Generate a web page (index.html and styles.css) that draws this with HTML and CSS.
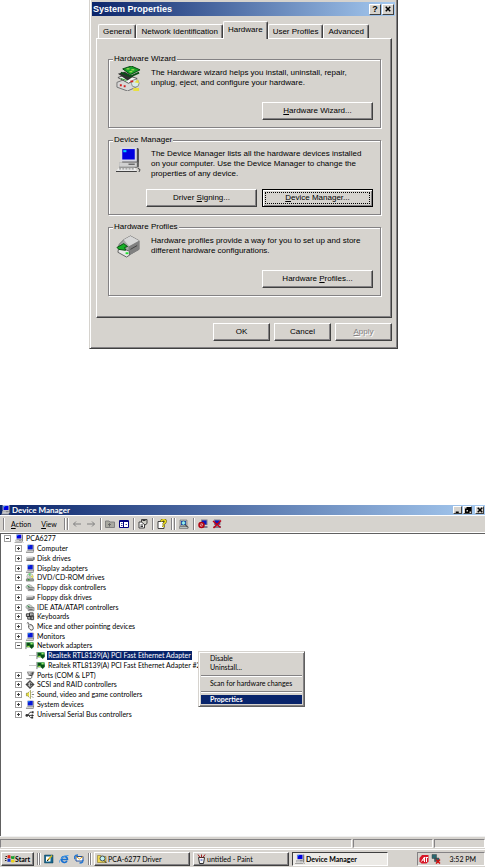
FILE: index.html
```html
<!DOCTYPE html>
<html lang="en">

<head>
    <meta charset="UTF-8">
    <title>Device Manager</title>
    <link rel="stylesheet" href="styles.css">
</head>

<body>
    <svg class="defs" aria-hidden="true">
        <symbol id="pc" viewBox="0 0 24 24">
            <path d="M5 1h16l1 1v13H6z" fill="#505050" />
            <path d="M4 0h16v14H4z" fill="#d8d8e0" />
            <path d="M6 2h12v10H6z" fill="#0000e0" />
            <path d="M7 3h3v2H7z" fill="#00c8ff" />
            <path d="M3 15h17l2-1v5l-2 1H3z" fill="#606060" />
            <path d="M3 15h17v4H3z" fill="#d0d0d0" />
            <path d="M12 16h6v1h-6z" fill="#404040" />
            <path d="M3 20h15l2 3H0z" fill="#f0f0f0" />
            <path d="M0 23h20v1H0z" fill="#404040" />
            <path d="M3 21h2m1 0h2m1 0h2m1 0h2m1 0h2" stroke="#909090" />
            <path d="M21 20l2 2-1 2" fill="none" stroke="#505050" />
        </symbol>
        <symbol id="monitor" viewBox="0 0 20 20">
            <path d="M4 1h14v13H4z" fill="#c8c8c8" />
            <path d="M5 2h11v10H5z" fill="#0818d8" />
            <path d="M6 3h3v2H6z" fill="#30c8ff" />
            <path d="M18 2h1v13H4v-1h14z" fill="#404040" />
            <path d="M1 15h16v3H1z" fill="#d0d0d0" />
            <path d="M1 18h17v1H1zM17 15h1v3h-1z" fill="#404040" />
        </symbol>
        <symbol id="drive" viewBox="0 0 20 20">
            <path d="M3 6h15l1 2v6H2V8z" fill="#a8a8a8" />
            <path d="M3 7h13v2H3z" fill="#e0e0e0" />
            <path d="M2 14h15l2-2V7" fill="none" stroke="#404040" stroke-width="2" />
            <path d="M5 11h9" stroke="#707070" />
        </symbol>
        <symbol id="disc" viewBox="0 0 20 20">
            <circle cx="10" cy="8" r="7" fill="#e0e0d8" stroke="#808080" />
            <path d="M10 8 6 2a7 7 0 0 1 6-1z" fill="#60e070" />
            <path d="M10 8l7-3v6z" fill="#e8e050" />
            <circle cx="10" cy="8" r="2" fill="#fff" stroke="#707070" />
            <path d="M2 13h16v5H2z" fill="#a0a8a0" stroke="#404040" />
            <path d="M5 15h4" stroke="#00a000" stroke-width="2" />
        </symbol>
        <symbol id="ctrl" viewBox="0 0 20 20">
            <path d="M1 7l7-4 7 4v4l-7 4-7-4z" fill="#c8d0c8" stroke="#808080" />
            <path d="M4 6l6 4" stroke="#209040" stroke-width="2" />
            <path d="M6 10h13v7H6z" fill="#c8c8c8" stroke="#404040" />
            <path d="M8 14h8" stroke="#505050" stroke-width="2" />
        </symbol>
        <symbol id="keys" viewBox="0 0 20 20">
            <path d="M2 4h7v6H2zM9 2h8v7H9zM5 10h7v6H5zM12 9h6v8h-6z" fill="#d0d0d0" stroke="#303030" stroke-width="2" />
            <path d="M4 7h3M12 5h2M8 13h2M14 13h3" stroke="#303030" />
        </symbol>
        <symbol id="mouse" viewBox="0 0 20 20">
            <path d="M3 3c4-4 5 1 3 3" fill="none" stroke="#404040" stroke-width="2" />
            <path d="M7 8c2-4 7-3 9 1 2 5 2 8-2 9-3 0-5-2-7-6z" fill="#f4f4f4" stroke="#404040" stroke-width="2" />
            <path d="M8 10l6-3" stroke="#707070" />
        </symbol>
        <symbol id="nic" viewBox="0 0 20 20">
            <path d="M1 2v16" stroke="#707070" stroke-width="2" />
            <path d="M2 3h16v11H2z" fill="#0a7a20" />
            <path d="M4 5h5v5H4z" fill="#103818" />
            <path d="M11 4h5v5h-5z" fill="#70e070" />
            <path d="M10 8h8v4l-4 6-4-4z" fill="#085018" />
            <path d="M4 12h5M13 6h2" stroke="#d8f060" stroke-width="2" />
        </symbol>
        <symbol id="port" viewBox="0 0 20 20">
            <path d="M4 2h15l-3 8H7z" fill="#d8d8d8" stroke="#404040" />
            <path d="M14 3h4l-2 6h-3z" fill="#484848" />
            <path d="M7 5h1m2 0h1m2 0h1M8 8h1m2 0h1" stroke="#303030" stroke-width="2" />
            <path d="M9 10h5v3c0 4-3 5-12 4" fill="none" stroke="#404040" stroke-width="2" />
        </symbol>
        <symbol id="scsi" viewBox="0 0 20 20">
            <path d="M10 2l8 8-8 8-8-8z" fill="#d0d0d0" stroke="#505050" stroke-width="3" />
            <path d="M1 10h6m4-3v6m0-3h8" stroke="#404040" stroke-width="2" />
        </symbol>
        <symbol id="sound" viewBox="0 0 20 20">
            <path d="M2 7h3l6-6v18l-6-6H2z" fill="#e8e040" stroke="#505000" />
            <path d="M9 3v14" stroke="#fff" stroke-width="2" />
            <path d="M14 6l3-3M14 10h5M14 14l3 3" stroke="#707070" stroke-width="2" />
        </symbol>
        <symbol id="usb" viewBox="0 0 20 20">
            <path d="M1 12h14M5 12l5-7h4M7 12l4 5h4" fill="none" stroke="#303030" stroke-width="2" />
            <path d="M14 9l5 3-5 3zM14 3h4v4h-4zM13 15h4v4h-4z" fill="#303030" />
            <circle cx="3" cy="12" r="3" fill="#303030" />
        </symbol>
    </svg>

    <div class="top">
        <form class="dialog">
            <header class="caption">
                <h1>System Properties</h1>
                <button type="button" class="cap" aria-label="Help">?</button>
                <button type="button" class="cap" aria-label="Close">
                    <svg viewBox="0 0 8 8"><path d="M1 1l6 6M7 1L1 7" /></svg>
                </button>
            </header>
            <nav class="tabs">
                <button type="button">General</button>
                <button type="button">Network Identification</button>
                <button type="button" class="active">Hardware</button>
                <button type="button">User Profiles</button>
                <button type="button">Advanced</button>
            </nav>
            <div class="panel">
                <fieldset>
                    <legend>Hardware Wizard</legend>
                    <div class="info">
                        <svg viewBox="0 0 26 26">
                            <path d="M1 17l8-3 12 4v4l-9 4-11-4z" fill="#d8d8d8" stroke="#707070" />
                            <path d="M2 12l8-3 12 4-9 5z" fill="#f4f4f4" stroke="#505050" />
                            <path d="M2 8l7-2 9 5-6 4z" fill="#303030" />
                            <path d="M7 3l9-3 9 4-10 5z" fill="#18a028" stroke="#084810" />
                            <path d="M5 7l10 4 9-4" fill="none" stroke="#0a5018" stroke-width="2" />
                            <path d="M11 3h3m2 1h3m-5 2h3" stroke="#c8f060" />
                            <circle cx="20" cy="18" r="4" fill="#d8ece8" stroke="#889088" />
                            <path d="M19 17l4-3 1 4zM18 23h6v3h-6z" fill="#e8e040" />
                            <path d="M4 20h2m2 1h2M15 16h3" stroke="#d02020" stroke-width="2" />
                            <path d="M5 13l6 2" stroke="#20a020" />
                        </svg>
                        <p>The Hardware wizard helps you install, uninstall, repair,<br>unplug, eject, and configure your hardware.</p>
                    </div>
                    <div class="actions">
                        <button type="button"><u>H</u>ardware Wizard...</button>
                    </div>
                </fieldset>
                <fieldset>
                    <legend>Device Manager</legend>
                    <div class="info">
                        <svg><use href="#pc" /></svg>
                        <p>The Device Manager lists all the hardware devices installed<br>on your computer. Use the Device Manager to change the<br>properties of any device.</p>
                    </div>
                    <div class="actions">
                        <button type="button">Driver <u>S</u>igning...</button>
                        <button type="button" class="focused"><u>D</u>evice Manager...</button>
                    </div>
                </fieldset>
                <fieldset>
                    <legend>Hardware Profiles</legend>
                    <div class="info">
                        <svg viewBox="0 0 26 26">
                            <path d="M8 6l7-4 9 5v9l-11 6-10-6v-5z" fill="#a8a8a8" stroke="#707070" />
                            <path d="M8 6l7-4 9 5-10 6z" fill="#d8d8d8" />
                            <path d="M13 13l11-6v9l-11 7z" fill="#808080" />
                            <path d="M3 13l11 5v4l-3 2-9-5z" fill="#e8e8e8" stroke="#606060" />
                            <path d="M1 14l7-4 4 3-3 1 1 3-7-1z" fill="#18b028" stroke="#085010" />
                            <path d="M15 16l7-4" stroke="#404040" />
                            <path d="M10 20h3" stroke="#20e030" stroke-width="2" />
                        </svg>
                        <p>Hardware profiles provide a way for you to set up and store<br>different hardware configurations.</p>
                    </div>
                    <div class="actions">
                        <button type="button">Hardware <u>P</u>rofiles...</button>
                    </div>
                </fieldset>
            </div>
            <footer>
                <button type="button">OK</button>
                <button type="button">Cancel</button>
                <button type="button" disabled><u>A</u>pply</button>
            </footer>
        </form>
    </div>

    <main class="desktop">
        <header class="caption">
            <svg class="ico"><use href="#pc" /></svg>
            <h2>Device Manager</h2>
            <button class="cap" aria-label="Minimize"><svg viewBox="0 0 8 8"><path d="M1 7h4" /></svg></button>
            <button class="cap" aria-label="Restore"><svg viewBox="0 0 8 8"><path d="M3 3V1h4v4H5M1 3h4v4H1z" /></svg></button>
            <button class="cap close" aria-label="Close"><svg viewBox="0 0 8 8"><path d="M1 1l6 6M7 1L1 7" /></svg></button>
        </header>

        <div class="toolbar">
            <i class="bar"></i>
            <button class="menu"><u>A</u>ction</button>
            <button class="menu"><u>V</u>iew</button>
            <i class="bar"></i><i class="bar"></i>
            <button aria-label="Back"><svg viewBox="0 0 20 20"><path d="M18 10H3m5-5l-5 5 5 5" fill="none" stroke="#808080" stroke-width="2" /></svg></button>
            <button aria-label="Forward"><svg viewBox="0 0 20 20"><path d="M2 10h15m-5-5l5 5-5 5" fill="none" stroke="#808080" stroke-width="2" /></svg></button>
            <i class="bar"></i>
            <button aria-label="Up"><svg viewBox="0 0 20 20"><path d="M1 4h7l2 2h9v11H1z" fill="#a8a8a0" stroke="#808080" stroke-width="2" /><path d="M9 15V9m-3 3l3-3 3 3" fill="none" stroke="#686868" stroke-width="2" /></svg></button>
            <button aria-label="Show tree"><svg viewBox="0 0 20 20"><path d="M1 3h18v14H1z" fill="#fff" stroke="#000080" stroke-width="2" /><path d="M1 5h18M9 4v13" stroke="#000080" stroke-width="2" /><path d="M4 9h3m-3 4h3m6-2h3" stroke="#4040a0" stroke-width="2" /></svg></button>
            <i class="bar"></i>
            <button aria-label="Properties"><svg viewBox="0 0 20 20"><path d="M2 6h11v12H2z" fill="#fff" stroke="#404040" stroke-width="2" /><path d="M7 1h11v8l-4 3-7-6z" fill="#d0d0c8" stroke="#404040" stroke-width="2" /><path d="M9 3h6M5 12h5m-5 3h5" stroke="#303030" stroke-width="2" /></svg></button>
            <i class="bar"></i>
            <button aria-label="Help"><svg viewBox="0 0 20 20"><path d="M2 5h12v14H2z" fill="#fff" stroke="#404040" stroke-width="2" /><path d="M9 5c0-5 9-4 8 0 0 3-4 3-4 6m0 2v3" fill="none" stroke="#605800" stroke-width="5" /><path d="M9 5c0-5 9-4 8 0 0 3-4 3-4 6m0 2v3" fill="none" stroke="#f0e020" stroke-width="3" /></svg></button>
            <i class="bar"></i><i class="bar"></i>
            <button aria-label="Scan"><svg viewBox="0 0 20 20"><path d="M2 2h14v12H2zM1 15h17v4H1z" fill="#b8c0c0" stroke="#505050" /><path d="M4 4h10v8H4z" fill="#1030c0" /><circle cx="9" cy="8" r="4" fill="#90f0f8" stroke="#205060" /><path d="M12 11l6 6" stroke="#303030" stroke-width="2" /></svg></button>
            <i class="bar"></i>
            <button aria-label="Disable"><svg viewBox="0 0 20 20"><path d="M6 1h13v11H6zM4 14h15v4H4z" fill="#808090" /><path d="M8 3h9v8H8z" fill="#0818c0" /><circle cx="7" cy="12" r="5" fill="#e0a0a0" stroke="#b00010" stroke-width="3" /><path d="M4 9l6 6" stroke="#b00010" stroke-width="2" /></svg></button>
            <button aria-label="Uninstall"><svg viewBox="0 0 20 20"><path d="M4 1h13v11H4zM3 14h15v4H3z" fill="#808090" /><path d="M6 3h9v8H6z" fill="#0818c0" /><path d="M2 4l15 13M18 3L3 18" stroke="#c00018" stroke-width="3" /></svg></button>
        </div>

        <div class="view">
            <ul class="tree">
                <li class="root"><i class="exp"></i><svg class="ico"><use href="#pc" /></svg><span>PCA6277</span></li>
                <li><i class="exp plus"></i><svg class="ico"><use href="#monitor" /></svg><span>Computer</span></li>
                <li><i class="exp plus"></i><svg class="ico"><use href="#drive" /></svg><span>Disk drives</span></li>
                <li><i class="exp plus"></i><svg class="ico"><use href="#monitor" /></svg><span>Display adapters</span></li>
                <li><i class="exp plus"></i><svg class="ico"><use href="#disc" /></svg><span>DVD/CD-ROM drives</span></li>
                <li><i class="exp plus"></i><svg class="ico"><use href="#ctrl" /></svg><span>Floppy disk controllers</span></li>
                <li><i class="exp plus"></i><svg class="ico"><use href="#drive" /></svg><span>Floppy disk drives</span></li>
                <li><i class="exp plus"></i><svg class="ico"><use href="#ctrl" /></svg><span>IDE ATA/ATAPI controllers</span></li>
                <li><i class="exp plus"></i><svg class="ico"><use href="#keys" /></svg><span>Keyboards</span></li>
                <li><i class="exp plus"></i><svg class="ico"><use href="#mouse" /></svg><span>Mice and other pointing devices</span></li>
                <li><i class="exp plus"></i><svg class="ico"><use href="#monitor" /></svg><span>Monitors</span></li>
                <li><i class="exp"></i><svg class="ico"><use href="#nic" /></svg><span>Network adapters</span></li>
                <li class="leaf"><svg class="ico"><use href="#nic" /></svg><span class="selected">Realtek RTL8139(A) PCI Fast Ethernet Adapter</span></li>
                <li class="leaf"><svg class="ico"><use href="#nic" /></svg><span>Realtek RTL8139(A) PCI Fast Ethernet Adapter #2</span></li>
                <li><i class="exp plus"></i><svg class="ico"><use href="#port" /></svg><span>Ports (COM &amp; LPT)</span></li>
                <li><i class="exp plus"></i><svg class="ico"><use href="#scsi" /></svg><span>SCSI and RAID controllers</span></li>
                <li><i class="exp plus"></i><svg class="ico"><use href="#sound" /></svg><span>Sound, video and game controllers</span></li>
                <li><i class="exp plus"></i><svg class="ico"><use href="#monitor" /></svg><span>System devices</span></li>
                <li><i class="exp plus"></i><svg class="ico"><use href="#usb" /></svg><span>Universal Serial Bus controllers</span></li>
            </ul>
            <div class="popup">
                <button>Disable</button>
                <button>Uninstall...</button>
                <hr>
                <button>Scan for hardware changes</button>
                <hr>
                <button class="selected">Properties</button>
            </div>
        </div>

        <div class="status"><span></span><span></span><span></span></div>

        <footer class="taskbar">
            <button class="start">
                <svg class="ico" viewBox="0 0 20 20"><path d="M1 5h3M0 9h3M0 13h3" stroke="#202020" stroke-width="2" /><path d="M5 3c3-2 4-1 6 0v6c-2-1-4-1-6 0z" fill="#e02818" /><path d="M12 4c2 1 4 1 7-1v6c-3 2-5 1-7 0z" fill="#18a030" /><path d="M5 10c2-1 4-1 6 0v6c-2-1-4-1-6 0z" fill="#1838d0" /><path d="M12 11c2 1 4 1 7-1v6c-3 2-5 1-7 0z" fill="#e8d018" /></svg>Start
            </button>
            <i class="bar"></i><i class="bar"></i>
            <button class="quick" aria-label="Show Desktop"><svg viewBox="0 0 20 20"><path d="M1 2h17v16H1z" fill="#186890" stroke="#083850" /><path d="M4 5h9v10H4z" fill="#fff" /><path d="M7 13L16 3" stroke="#d8b820" stroke-width="3" /><path d="M6 14l3-3" stroke="#202020" stroke-width="2" /></svg></button>
            <button class="quick" aria-label="Internet Explorer"><svg viewBox="0 0 20 20"><path d="M16 14c-3 5-12 3-11-4 1-7 12-7 12 1H6" fill="none" stroke="#1870d0" stroke-width="3" /><path d="M1 17C0 11 10 2 19 3" fill="none" stroke="#50a0e8" stroke-width="2" /></svg></button>
            <button class="quick" aria-label="Outlook Express"><svg viewBox="0 0 20 20"><path d="M4 5h14v9H4z" fill="#fff" stroke="#2050a0" stroke-width="2" /><path d="M4 5l7 5 7-5" fill="none" stroke="#e0a020" stroke-width="2" /><path d="M8 2C0 2 0 8 2 10M11 18c6 0 7-2 6-6" fill="none" stroke="#2878d0" stroke-width="3" /></svg></button>
            <i class="bar"></i><i class="bar"></i>
            <button class="task"><svg class="ico" viewBox="0 0 20 20"><path d="M1 3h7l2 2h8v12H1z" fill="#f0d850" stroke="#706010" /><circle cx="11" cy="9" r="5" fill="#c0f0f0" stroke="#405060" stroke-width="2" /><path d="M14 13l5 5" stroke="#303030" stroke-width="2" /></svg>PCA-6277 Driver</button>
            <button class="task"><svg class="ico" viewBox="0 0 20 20"><path d="M5 7h12l-2 12H7z" fill="#f4f4f4" stroke="#303030" stroke-width="2" /><path d="M8 7L4 1M11 7V1M14 7l4-6" stroke="#a02020" stroke-width="2" /><path d="M9 12h4" stroke="#2040c0" stroke-width="2" /></svg>untitled - Paint</button>
            <button class="task pressed"><svg class="ico"><use href="#pc" /></svg>Device Manager</button>
            <div class="tray">
                <svg class="ico" viewBox="0 0 20 20"><path d="M6 2h13v13l-4 4H5l-4-4V8z" fill="#d81828" /><path d="M5 15l6-9v10M7 12h4M13 7h5m-3 0v9" fill="none" stroke="#fff" stroke-width="2" /></svg>
                <svg class="ico" viewBox="0 0 20 20"><path d="M2 1h9v8H2zM7 8h9v7H7z" fill="#286870" stroke="#404040" /><path d="M10 11l8 8M18 11l-8 8" stroke="#d01010" stroke-width="3" /></svg>
                <time>3:52 PM</time>
            </div>
        </footer>
    </main>
</body>

</html>
```
FILE: styles.css
```css
* {
    box-sizing: border-box;
}

body {
    margin: 0;
    min-height: 100vh;
    display: flex;
    flex-direction: column;
    background: #fff;
    color: #000;
    font: 8px/10px "Liberation Sans", Arial, sans-serif;
}

button {
    padding: 0;
    border: 0;
    background: none;
    color: inherit;
    font: inherit;
    white-space: nowrap;
}

h1,
h2,
p,
ul {
    margin: 0;
    padding: 0;
}

ul {
    list-style: none;
}

.defs {
    position: absolute;
    width: 0;
    height: 0;
}

.ico {
    width: 10px;
    height: 10px;
    flex: none;
}

/* title bars */
.caption {
    display: flex;
    align-items: center;
    background: linear-gradient(90deg, #0a246a, #a6caf0);
    color: #fff;
}

.caption h1,
.caption h2 {
    flex: 1;
    font-weight: bold;
}

.cap {
    display: flex;
    align-items: center;
    justify-content: center;
    background: #d6d3ce;
    border: 1px solid;
    border-color: #fff #404040 #404040 #fff;
    color: #000;
    font-weight: bold;
}

.cap svg {
    width: 6px;
    height: 6px;
    fill: none;
    stroke: #000;
    stroke-width: 2;
}

/* system properties */
.top {
    display: flex;
    justify-content: center;
    padding-left: 2px;
    margin-bottom: 156px;
}

.dialog {
    width: 309px;
    padding: 2px 5px 7px 2px;
    background: #d6d3ce;
    border: 1px solid;
    border-color: transparent #404040 #404040 #d6d3ce;
    border-top: 0;
    box-shadow: inset 1px 0 #fff, inset -1px -1px #848284;
}

.dialog .caption {
    height: 14px;
    padding: 0 1px;
    margin-right: -3px;
}

.dialog h1 {
    font-size: 9px;
}

.dialog .cap {
    width: 12px;
    height: 11px;
    font-size: 9px;
}

.dialog .cap:last-child {
    margin-left: 1px;
}

.tabs {
    display: flex;
    align-items: flex-end;
    height: 22px;
    padding-left: 6px;
}

.tabs button {
    height: 14px;
    padding: 0 4px;
    border: 1px solid;
    border-color: #fff #404040 transparent #fff;
    border-bottom: 0;
    border-radius: 2px 2px 0 0;
    box-shadow: inset -1px 0 #848284;
}

.tabs .active {
    height: 18px;
    padding-bottom: 2px;
    margin-bottom: -1px;
    background: #d6d3ce;
    position: relative;
}

.panel {
    margin-left: 4px;
    padding: 15px 10px 21px 11px;
    border: 1px solid;
    border-color: #fff #404040 #404040 #fff;
    box-shadow: inset -1px -1px #848284;
}

fieldset {
    margin: 0 0 7px;
    padding: 2px 7px 7px;
    border: 1px solid #848284;
    box-shadow: 1px 1px #fff, inset 1px 1px #fff;
}

fieldset:last-child {
    margin-bottom: 0;
}

legend {
    padding: 0 1px;
    margin-left: -3px;
    background: #d6d3ce;
}

.info {
    display: flex;
    gap: 10px;
    min-height: 36px;
}

.info svg {
    width: 25px;
    height: 25px;
    flex: none;
}

.info p {
    padding: 2px 0 10px;
}

.actions {
    display: flex;
    justify-content: flex-end;
    gap: 5px;
}

.actions button,
.dialog footer button {
    height: 18px;
    border: 1px solid;
    border-color: #fff #404040 #404040 #fff;
    box-shadow: inset -1px -1px #848284;
}

.actions button {
    width: 111px;
}

.actions .focused {
    border-color: #000;
    box-shadow: inset 1px 1px #fff, inset -1px -1px #848284;
    outline: 1px dotted #000;
    outline-offset: -4px;
}

.dialog footer {
    display: flex;
    justify-content: flex-end;
    gap: 4px;
    padding-top: 5px;
}

.dialog footer button {
    width: 57px;
}

.dialog button:disabled {
    color: #848284;
    text-shadow: 1px 1px #fff;
}

/* device manager */
.desktop {
    flex: 1;
    display: flex;
    flex-direction: column;
    background: #d6d3ce;
    font: 7px/9px Lato, "Liberation Sans", sans-serif;
}

.desktop .caption {
    height: 10px;
    gap: 1px;
    padding: 0 1px;
}

.desktop h2 {
    font-size: 8px;
}

.desktop .cap {
    width: 9px;
    height: 8px;
}

.desktop .close {
    margin-left: 2px;
}

.toolbar {
    display: flex;
    align-items: center;
    height: 18px;
    padding-left: 3px;
    gap: 4px;
    border-top: 1px solid #fff;
    border-bottom: 1px solid #fff;
}

.toolbar svg,
.quick svg {
    display: block;
    width: 10px;
    height: 10px;
}

.toolbar .menu {
    padding: 0 3px;
}

.bar {
    width: 1px;
    height: 12px;
    background: #848284;
    box-shadow: 1px 0 #fff;
}

.bar + .bar {
    margin-left: -2px;
}

.view {
    flex: 1;
    position: relative;
    background: #fff;
    border-top: 1px solid #606060;
    border-left: 1px solid #606060;
}

.tree {
    display: grid;
    grid-auto-rows: 1fr;
    min-height: 185px;
}

.tree li {
    display: flex;
    align-items: center;
    padding-left: 14px;
    white-space: nowrap;
}

.tree .root {
    padding-left: 3px;
}

.tree .leaf {
    padding-left: 28px;
}

.tree .ico {
    height: 9px;
}

.leaf::before {
    content: "";
    width: 7px;
    height: 1px;
    background: #c8c8c8;
}

.tree span {
    margin-left: 1px;
    padding: 0 1px;
}

.exp {
    width: 7px;
    height: 7px;
    margin-right: 3px;
    border: 1px solid #a0a0a0;
    background: linear-gradient(#404040, #404040) center / 3px 1px no-repeat;
}

.plus {
    background: linear-gradient(#404040, #404040) center / 3px 1px no-repeat, linear-gradient(#404040, #404040) center / 1px 3px no-repeat;
}

.selected {
    background: #08246b;
    color: #fff;
}

.popup {
    position: absolute;
    top: 117px;
    left: 197px;
    display: flex;
    flex-direction: column;
    width: 107px;
    padding: 2px;
    background: #d6d3ce;
    border: 1px solid;
    border-color: #d6d3ce #606060 #606060 #d6d3ce;
    box-shadow: inset 1px 1px #fff, inset -1px -1px #848284;
}

.popup button {
    height: 9px;
    padding-left: 9px;
    text-align: left;
}

.popup .selected {
    font-weight: bold;
}

.popup hr {
    width: 100%;
    height: 2px;
    margin: 3px 0 2px;
    border: 0;
    border-top: 1px solid #848284;
    border-bottom: 1px solid #fff;
}

.status {
    display: flex;
    gap: 1px;
    height: 13px;
    padding: 2px 0 1px;
    border-top: 1px solid #f0f0f0;
}

.status span {
    flex: 0 0 80px;
    border: 1px solid;
    border-color: #848284 #fff #fff #848284;
}

.status span:first-child {
    flex: 1;
}

.status span:last-child {
    flex-basis: 51px;
}

.taskbar {
    display: flex;
    align-items: center;
    gap: 3px;
    height: 18px;
    padding: 1px 0 0 1px;
    border-top: 1px solid #fff;
}

.start,
.task {
    display: flex;
    align-items: center;
    height: 14px;
    padding: 0 2px;
    border: 1px solid;
    border-color: #fff #404040 #404040 #fff;
    box-shadow: inset -1px -1px #848284;
}

.start {
    padding: 0 3px;
    font-weight: bold;
}

.quick {
    padding: 0 1px;
}

.task {
    flex: 0 1 96px;
    gap: 1px;
}

.pressed {
    background: #eceae6;
    border-color: #404040 #fff #fff #404040;
    box-shadow: none;
    font-weight: bold;
}

.tray {
    display: flex;
    align-items: center;
    gap: 2px;
    width: 68px;
    height: 14px;
    margin-left: auto;
    padding: 0 8px 0 1px;
    border: 1px solid;
    border-color: #848284 #fff #fff #848284;
}

.tray time {
    margin-left: auto;
}
```
